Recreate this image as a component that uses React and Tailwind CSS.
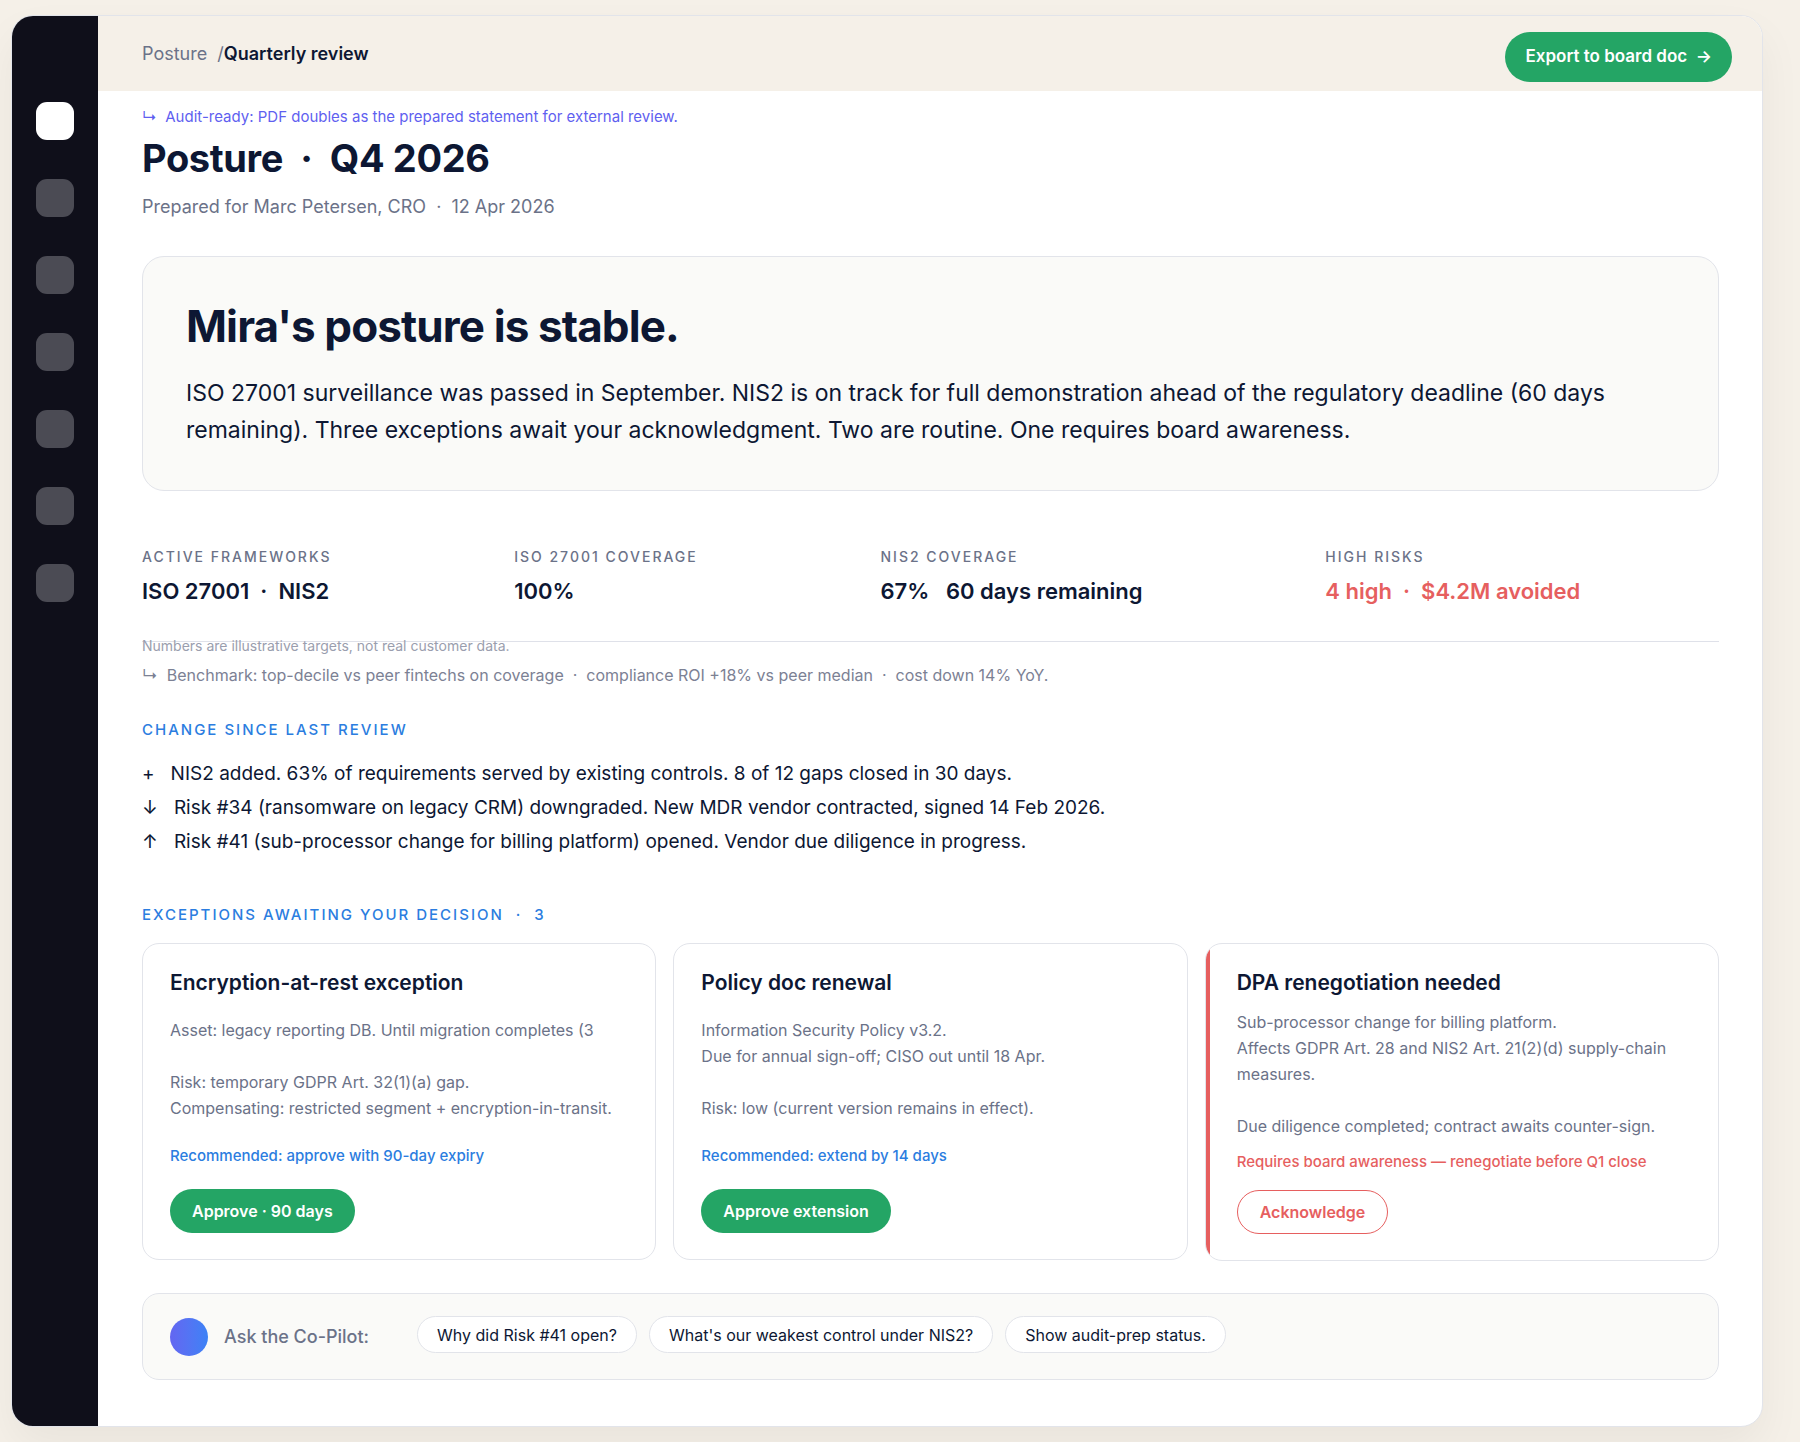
const NAV_ITEMS = ['Posture', 'Frameworks', 'Controls', 'Risks', 'Vendors', 'Evidence', 'Settings'];

const STATS = [
  { label: 'Active frameworks', value: 'ISO 27001\u00a0 ·\u00a0 NIS2' },
  { label: 'ISO 27001 coverage', value: '100%' },
  { label: 'NIS2 coverage', value: '67%\u00a0\u00a0 60 days remaining' },
  { label: 'High risks', value: '4 high\u00a0 ·\u00a0 $4.2M avoided', alert: true },
];

const CHANGES = [
  '+\u00a0\u00a0 NIS2 added. 63% of requirements served by existing controls. 8 of 12 gaps closed in 30 days.',
  '↓\u00a0\u00a0 Risk #34 (ransomware on legacy CRM) downgraded. New MDR vendor contracted, signed 14 Feb 2026.',
  '↑\u00a0\u00a0 Risk #41 (sub-processor change for billing platform) opened. Vendor due diligence in progress.',
];

const EXCEPTIONS = [
  {
    title: 'Encryption-at-rest exception',
    body: 'Asset: legacy reporting DB. Until migration completes (3\n\nRisk: temporary GDPR Art. 32(1)(a) gap.\nCompensating: restricted segment + encryption-in-transit.',
    note: 'Recommended: approve with 90-day expiry',
    action: 'Approve · 90 days',
  },
  {
    title: 'Policy doc renewal',
    body: 'Information Security Policy v3.2.\nDue for annual sign-off; CISO out until 18 Apr.\n\nRisk: low (current version remains in effect).',
    note: 'Recommended: extend by 14 days',
    action: 'Approve extension',
  },
];

const PROMPTS = ['Why did Risk #41 open?', "What's our weakest control under NIS2?", 'Show audit-prep status.'];

function Sidebar() {
  return (
    <nav aria-label="Main" className="flex w-[86px] shrink-0 flex-col items-center gap-[39px] bg-[#0f0f1a] pt-[86px]">
      {NAV_ITEMS.map((item, i) => (
        <button
          key={item}
          type="button"
          aria-label={item}
          className={i === 0 ? 'size-[38px] rounded-[11px] bg-white' : 'size-[38px] rounded-[11px] bg-[#4b4b54]'}
        />
      ))}
    </nav>
  );
}

function TopBar() {
  return (
    <header className="flex h-[75px] items-center justify-between bg-[#f5f0e8] pr-[30px] pl-11">
      <p className="text-[18px] leading-6 text-[#6b7288]">
        Posture&nbsp; /<span className="font-semibold text-[#0d1733]">Quarterly review</span>
      </p>
      <button type="button" className="mt-1.5 h-[50px] rounded-full bg-[#24a565] px-5 text-[17px] font-semibold text-white">
        Export to board doc&nbsp; →
      </button>
    </header>
  );
}

function SectionLabel({ children, className }) {
  return <h2 className={`text-[15px] leading-5 font-medium tracking-[2px] text-[#2b7de0] uppercase ${className}`}>{children}</h2>;
}

function ExceptionCard({ title, body, note, action }) {
  return (
    <article className="rounded-[17px] border border-[#e2e4ea] bg-white px-[27px] pt-[25px] pb-[26px]">
      <h3 className="text-[21px] leading-7 font-semibold text-[#0d1733]">{title}</h3>
      <p className="mt-5 text-[16px] leading-[26px] whitespace-pre-line text-[#6b7288]">{body}</p>
      <p className="mt-[25px] text-[15px] leading-5 font-medium text-[#2b7de0]">{note}</p>
      <button type="button" className="mt-[23px] h-11 rounded-full bg-[#24a565] px-[22px] text-[16px] font-semibold text-white">
        {action}
      </button>
    </article>
  );
}

function EscalationCard() {
  return (
    <article className="relative overflow-hidden rounded-[17px] border border-[#e2e4ea] bg-white pt-[25px] pr-[27px] pb-[26px] pl-[31px]">
      <span className="absolute inset-y-0 left-0 w-1 bg-[#e65f5f]" />
      <h3 className="text-[21px] leading-7 font-semibold text-[#0d1733]">DPA renegotiation needed</h3>
      <p className="mt-3 text-[16px] leading-[26px] whitespace-pre-line text-[#6b7288]">
        {'Sub-processor change for billing platform.\nAffects GDPR Art. 28 and NIS2 Art. 21(2)(d) supply-chain measures.\n\nDue diligence completed; contract awaits counter-sign.'}
      </p>
      <p className="mt-[13px] text-[15px] leading-5 font-medium text-[#e65f5f]">
        Requires board awareness — renegotiate before Q1 close
      </p>
      <button
        type="button"
        className="mt-[18px] h-11 rounded-full border border-[#e65f5f] bg-white px-[22px] text-[16px] font-semibold text-[#e65f5f]"
      >
        Acknowledge
      </button>
    </article>
  );
}

export default function App() {
  return (
    <div className="min-h-screen bg-[#f5f0e8] pt-[15px] pr-[37px] pb-[14px] pl-[11px] font-['Inter',sans-serif] text-[#0d1733]">
      <div className="flex overflow-hidden rounded-[22px] border border-[#e2e4ea] bg-white shadow-[0_20px_44px_rgba(15,15,26,0.05)]">
        <Sidebar />
        <div className="min-w-0 flex-1">
          <TopBar />
          <main className="pr-[43px] pb-[46px] pl-11">
            <p className="pt-4 text-[15px] leading-5 text-[#5f5ff0]">
              ↳&nbsp; Audit-ready: PDF doubles as the prepared statement for external review.
            </p>
            <h1 className="mt-[7px] text-[38px] leading-[48px] font-bold tracking-[-0.01em]">Posture&nbsp; ·&nbsp; Q4 2026</h1>
            <p className="mt-[13px] text-[18px] leading-6 text-[#6b7288]">Prepared for Marc Petersen, CRO&nbsp; ·&nbsp; 12 Apr 2026</p>

            <section className="mt-[37px] rounded-[22px] border border-[#e2e4ea] bg-[#fafaf8] px-[43px] pt-[42px] pb-[41px]">
              <h2 className="text-[44px] leading-[54px] font-bold tracking-[-0.02em]">Mira's posture is stable.</h2>
              <p className="mt-[22px] text-[23px] leading-[37px]">
                ISO 27001 surveillance was passed in September. NIS2 is on track for full demonstration ahead of the regulatory deadline (60 days
                remaining). Three exceptions await your acknowledgment. Two are routine. One requires board awareness.
              </p>
            </section>

            <dl className="mt-[56px] flex gap-11 border-b border-[#dfe1e9] pb-9">
              {STATS.map((s) => (
                <div key={s.label} className="flex-auto">
                  <dt className="text-[14px] leading-5 font-medium tracking-[2px] text-[#6b7288] uppercase">{s.label}</dt>
                  <dd className={s.alert ? 'mt-2.5 text-[22px] leading-7 font-semibold text-[#e65f5f]' : 'mt-2.5 text-[22px] leading-7 font-semibold'}>
                    {s.value}
                  </dd>
                </div>
              ))}
            </dl>
            <p className="-mt-1 text-[14px] leading-4 text-[#9a9eae]">Numbers are illustrative targets, not real customer data.</p>
            <p className="mt-[9px] text-[16px] leading-6 text-[#7c8194]">
              ↳&nbsp; Benchmark: top-decile vs peer fintechs on coverage&nbsp; ·&nbsp; compliance ROI +18% vs peer median&nbsp; ·&nbsp; cost down
              14% YoY.
            </p>

            <SectionLabel className="mt-[33px]">Change since last review</SectionLabel>
            <ul className="mt-[17px] text-[19px] leading-[34px]">
              {CHANGES.map((c) => (
                <li key={c}>{c}</li>
              ))}
            </ul>

            <SectionLabel className="mt-[46px]">Exceptions awaiting your decision&nbsp; ·&nbsp; 3</SectionLabel>
            <div className="mt-[18px] grid grid-cols-3 items-start gap-[17px]">
              {EXCEPTIONS.map((e) => (
                <ExceptionCard key={e.title} {...e} />
              ))}
              <EscalationCard />
            </div>

            <section className="mt-8 flex items-center rounded-[17px] border border-[#e2e4ea] bg-[#fafaf8] px-[27px] py-[22px]">
              <span className="size-[38px] rounded-full bg-linear-to-r from-[#6366f1] to-[#3b82f6]" />
              <p className="ml-4 text-[18px] leading-6 font-medium text-[#6b7288]">Ask the Co-Pilot:</p>
              <div className="mb-1 ml-12 flex gap-3">
                {PROMPTS.map((p) => (
                  <button key={p} type="button" className="h-[37px] rounded-full border border-[#e2e4ea] bg-white px-[19px] text-[16px]">
                    {p}
                  </button>
                ))}
              </div>
            </section>
          </main>
        </div>
      </div>
    </div>
  );
}
